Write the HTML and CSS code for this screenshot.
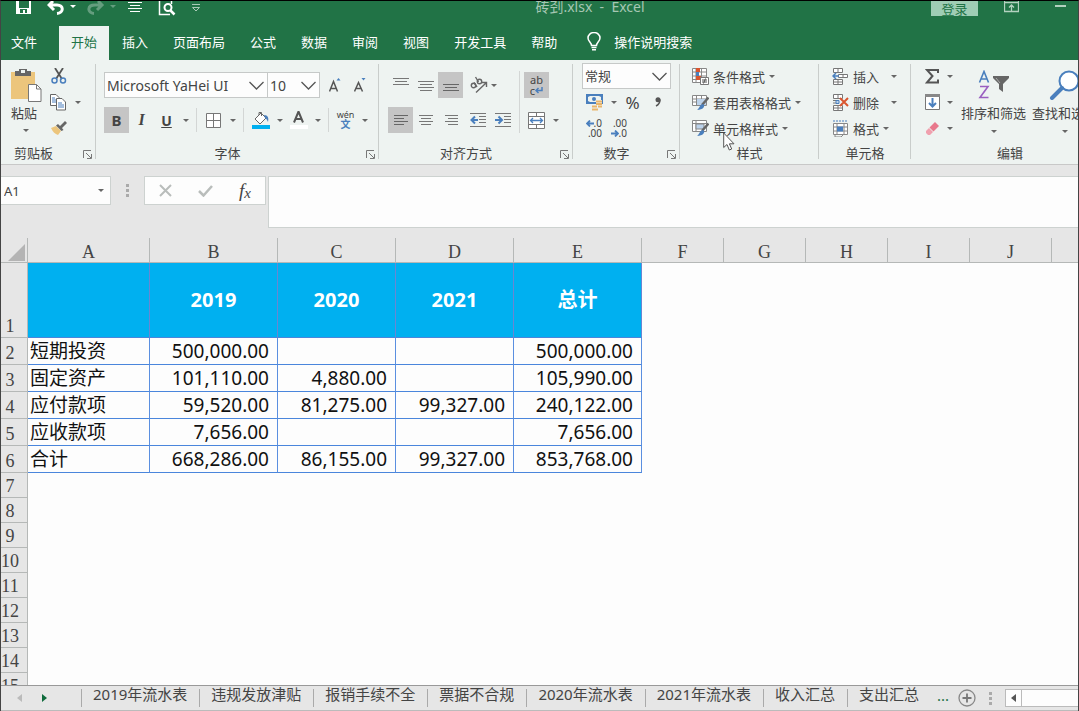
FILE: index.html
```html
<!DOCTYPE html>
<html lang="zh-CN">
<head>
  <meta charset="UTF-8" />
  <title>砖刭.xlsx - Excel</title>
  <link rel="stylesheet" href="styles.css">
</head>
<body>
  <header class="titlebar">
    <div class="quick">
      <button class="qbtn" aria-label="保存"><svg width="16" height="14" viewBox="0 0 16 14"><path d="M0 0h3v7h10V0h2v13H0z" fill="#fff"/><path d="M4 8h7v4H9V9H7v3H4z" fill="#217346"/></svg></button>
      <button class="qbtn undo" aria-label="撤消"><svg width="18" height="14" viewBox="0 0 18 14"><path d="M6 0L2 4l5 5M3 4h7c7 0 7 8 0 8.500" fill="none" stroke="#fff" stroke-width="3"/></svg><i class="caret"></i></button>
      <button class="qbtn redo" aria-label="恢复"><svg width="18" height="14" viewBox="0 0 18 14"><path d="M11 0l4 4-5 5M14 4H8C0 4 0 12 7 12.500" fill="none" stroke="#fff" stroke-width="3"/></svg><i class="caret"></i></button>
      <button class="qbtn" aria-label="居中"><svg width="16" height="12" viewBox="0 0 16 12"><path d="M1 1.500h14M3 4.500h10M1 7.500h14M3 10.500h10" stroke="#fff"/></svg></button>
      <button class="qbtn preview" aria-label="打印预览"><svg width="18" height="15" viewBox="0 0 18 15"><path d="M1.500 0v13.500H12M13.500 0v3" fill="none" stroke="#fff" stroke-width="1.500"/><circle cx="10" cy="6.500" r="3.500" fill="none" stroke="#fff" stroke-width="2"/><path d="M12.500 9.500l4 4" stroke="#fff" stroke-width="2.500"/></svg></button>
      <button class="qbtn" aria-label="自定义"><svg width="10" height="10" viewBox="0 0 10 10"><path d="M1 1.500h8M1.500 4.500h7L5 8z" fill="none" stroke="#a9cbb7"/></svg></button>
    </div>
    <h1 class="doc-title">砖刭.xlsx&nbsp; -&nbsp; Excel</h1>
    <button class="login">登录</button>
    <button class="winbtn" aria-label="功能区显示选项"><svg width="15" height="12" viewBox="0 0 15 12"><path d="M.5 0v10.500h14V0M1 1.500h13M7.500 10V4M5 6.500L7.500 4 10 6.500" fill="none" stroke="#b3d1bf" stroke-width="1.300"/></svg></button>
    <button class="winbtn min" aria-label="最小化"><svg width="11" height="12" viewBox="0 0 11 12"><path d="M0 5h11" stroke="#b3d1bf" stroke-width="2"/></svg></button>
  </header>

  <nav class="tabs">
    <button class="tab file">文件</button>
    <button class="tab active">开始</button>
    <button class="tab">插入</button>
    <button class="tab">页面布局</button>
    <button class="tab">公式</button>
    <button class="tab">数据</button>
    <button class="tab">审阅</button>
    <button class="tab">视图</button>
    <button class="tab">开发工具</button>
    <button class="tab">帮助</button>
    <button class="tab tell"><svg width="14" height="19" viewBox="0 0 14 19"><path d="M4.500 13.500c0-3-3.500-4-3.500-7.500a6 5.500 0 0 1 12 0c0 3.500-3.500 4.500-3.500 7.500z" fill="none" stroke="#fff" stroke-width="1.500"/><path d="M4.500 15.500h5M5 17.800h4" stroke="#fff" stroke-width="1.500"/></svg>操作说明搜索</button>
  </nav>

  <section class="ribbon">
    <div class="group clipboard">
      <div class="content">
        <button class="paste">
          <svg width="31" height="35" viewBox="0 0 31 35"><path d="M0 4h24v27H0z" fill="#ecc57c"/><path d="M4 3h4V1h8v2h4v5H4z" fill="#666"/><path d="M10 2h4v3h-4z" fill="#eef3f1"/><path d="M17.500 16.500h8l4.500 4.500v12.500H17.500z" fill="#fff" stroke="#777"/><path d="M25.500 16.500V21H30" fill="none" stroke="#777"/></svg>
          <span>粘贴</span>
          <i class="caret"></i>
        </button>
        <div class="stack">
          <button class="tool" aria-label="剪切"><svg width="16" height="16" viewBox="0 0 16 16"><path d="M4 0l7 11M12 0L5 11" stroke="#555" stroke-width="1.800"/><g fill="none" stroke="#4a7fbd" stroke-width="1.500"><circle cx="3.500" cy="12.500" r="2.500"/><circle cx="12" cy="12.500" r="2.500"/></g></svg></button>
          <button class="tool copy" aria-label="复制"><svg width="16" height="17" viewBox="0 0 16 17"><g fill="#fff" stroke="#666"><path d="M.5.5H6l3 3v8H.5z"/><path d="M6.500 4.500H12l3.500 3.500v8h-9z"/></g><path d="M2 4h3M2 6h4M2 8h4M8 9h4M8 11h6M8 13h6" stroke="#4a7fbd"/></svg><i class="caret"></i></button>
          <button class="tool" aria-label="格式刷"><svg width="16" height="14" viewBox="0 0 16 14"><path d="M0 7l5-2 5 5-3 4c-3-1-5-3-7-7z" fill="#ecc57c"/><path d="M5 4.500l2-1.500 2 2 5-5 2 2-5 5 1.500 2L10.500 10z" fill="#666"/></svg></button>
        </div>
      </div>
      <div class="label">剪贴板<svg class="launcher" width="9" height="9" viewBox="0 0 9 9"><path d="M.5 8V.5H8M3 3l5 5M8.500 4v4.500H4" fill="none" stroke="#777"/></svg></div>
    </div>

    <div class="group font">
      <div class="content rows">
        <div class="row">
          <label class="combo name"><select aria-label="字体"><option>Microsoft YaHei UI</option></select><svg width="15" height="9" viewBox="0 0 15 9"><path d="M.5 1l7 7 7-7" fill="none" stroke="#555" stroke-width="1.300"/></svg></label>
          <label class="combo size"><select aria-label="字号"><option>10</option></select><svg width="15" height="9" viewBox="0 0 15 9"><path d="M.5 1l7 7 7-7" fill="none" stroke="#555" stroke-width="1.300"/></svg></label>
          <button class="tool grow" aria-label="增大字号"><svg width="12" height="14" viewBox="0 0 12 14"><path d="M.5 13.500l4-10 4 10M2 10.500h5" fill="none" stroke="#555" stroke-width="1.500"/><path d="M7.500 2.500L9.500 0l2 2.500z" fill="#4a7fbd"/></svg></button>
          <button class="tool" aria-label="减小字号"><svg width="12" height="14" viewBox="0 0 12 14"><path d="M.5 13.500l4-9 4 9M2 10.500h5" fill="none" stroke="#555" stroke-width="1.500"/><path d="M7.500 0h4l-2 2.500z" fill="#4a7fbd"/></svg></button>
        </div>
        <div class="row">
          <button class="tool on bold">B</button>
          <button class="tool italic">I</button>
          <button class="tool underline">U</button><button class="drop" aria-label="下划线选项"><i class="caret"></i></button>
          <span class="sep"></span>
          <button class="tool" aria-label="边框"><svg width="15" height="15" viewBox="0 0 15 15"><path d="M.5.5h14v14H.5zM7.500 0v15M0 7.500h15" fill="#fff" stroke="#777"/></svg></button><button class="drop" aria-label="边框选项"><i class="caret"></i></button>
          <span class="sep"></span>
          <button class="tool" aria-label="填充颜色"><svg width="18" height="18" viewBox="0 0 18 18"><path d="M3 8l6-6 5 5-6 6z" fill="#fff" stroke="#666"/><path d="M7 4V1.500h2.500V5" fill="none" stroke="#666"/><path d="M12 4c4 0 5 3 4 7-1-2-1-3-3-4z" fill="#4a7fbd"/><path d="M0 14h18v4H0z" fill="#00b0f0"/></svg></button><button class="drop" aria-label="填充选项"><i class="caret"></i></button>
          <button class="tool" aria-label="字体颜色"><svg width="18" height="18" viewBox="0 0 18 18"><path d="M4 11.500l4.500-11 4.500 11M5.500 8h6" fill="none" stroke="#555" stroke-width="2"/><path d="M0 14h18v4H0z" fill="#fff"/></svg></button><button class="drop" aria-label="颜色选项"><i class="caret"></i></button>
          <span class="sep"></span>
          <button class="tool pinyin" aria-label="拼音"><span>wén</span><b>文</b></button><button class="drop" aria-label="拼音选项"><i class="caret"></i></button>
        </div>
      </div>
      <div class="label">字体<svg class="launcher" width="9" height="9" viewBox="0 0 9 9"><path d="M.5 8V.5H8M3 3l5 5M8.500 4v4.500H4" fill="none" stroke="#777"/></svg></div>
    </div>

    <div class="group align">
      <div class="content">
        <div class="rows">
          <div class="row">
            <button class="tool" aria-label="顶端对齐"><svg width="16" height="16" viewBox="0 0 16 16"><path d="M0 1.500h16M2 4.500h12M0 7.500h16" stroke="#777"/></svg></button>
            <button class="tool" aria-label="垂直居中"><svg width="16" height="16" viewBox="0 0 16 16"><path d="M0 4.500h16M2 7.500h12M0 10.500h16M2 13.500h12" stroke="#777"/></svg></button>
            <button class="tool on" aria-label="底端对齐"><svg width="16" height="16" viewBox="0 0 16 16"><path d="M0 7.500h16M2 10.500h12M0 13.500h16" stroke="#666"/></svg></button>
            <button class="tool orient" aria-label="方向"><svg width="18" height="18" viewBox="0 0 18 18"><g fill="none" stroke="#666" stroke-width="1.400"><circle cx="3.500" cy="9.500" r="2.200"/><path d="M4 6.500l3 4.500"/><circle cx="9.500" cy="5.500" r="2.200"/><path d="M5.500 1l3 5"/><path d="M6 16.500L16 7M12 6.500h4.500V11"/></g></svg><i class="caret"></i></button>
          </div>
          <div class="row">
            <button class="tool on" aria-label="左对齐"><svg width="14" height="12" viewBox="0 0 14 12"><path d="M0 1.500h14M0 4.500h10M0 7.500h14M0 10.500h10" stroke="#666"/></svg></button>
            <button class="tool" aria-label="居中"><svg width="14" height="12" viewBox="0 0 14 12"><path d="M0 1.500h14M2 4.500h10M0 7.500h14M2 10.500h10" stroke="#777"/></svg></button>
            <button class="tool" aria-label="右对齐"><svg width="14" height="12" viewBox="0 0 14 12"><path d="M1 1.500h13M4 4.500h10M1 7.500h13M4 10.500h10" stroke="#777"/></svg></button>
            <button class="tool outdent" aria-label="减少缩进量"><svg width="16" height="16" viewBox="0 0 16 16"><path d="M0 1.500h16M9 4.500h7M9 7.500h7M9 10.500h7M0 14.500h16" stroke="#777"/><path d="M8 8H2M5 4.500L1.500 8 5 11.500" fill="none" stroke="#4a7fbd" stroke-width="2"/></svg></button>
            <button class="tool" aria-label="增加缩进量"><svg width="16" height="16" viewBox="0 0 16 16"><path d="M0 1.500h16M9 4.500h7M9 7.500h7M9 10.500h7M0 14.500h16" stroke="#777"/><path d="M0 8h6M3.500 4.500L7 8l-3.500 3.500" fill="none" stroke="#4a7fbd" stroke-width="2"/></svg></button>
          </div>
        </div>
        <span class="sep tall"></span>
        <div class="rows">
          <div class="row">
            <button class="tool on wrap" aria-label="自动换行"><span>ab</span><span>c<svg width="8" height="7" viewBox="0 0 8 7"><path d="M7 0v3.500H1M3.500 1L1 3.500 3.500 6" fill="none" stroke="#4a7fbd" stroke-width="1.500"/></svg></span></button>
          </div>
          <div class="row">
            <button class="tool" aria-label="合并后居中"><svg width="17" height="17" viewBox="0 0 17 17"><path d="M.5.500h16v16H.5zM.5 4.500h16M.5 12.500h16M8.500 0v4M8.500 13v4" fill="#fff" stroke="#777"/><path d="M3 8.500h11M5 6L2.500 8.500 5 11M12 6l2.500 2.500L12 11" fill="none" stroke="#4a7fbd" stroke-width="1.300"/></svg></button><button class="drop" aria-label="合并选项"><i class="caret"></i></button>
          </div>
        </div>
      </div>
      <div class="label">对齐方式<svg class="launcher" width="9" height="9" viewBox="0 0 9 9"><path d="M.5 8V.5H8M3 3l5 5M8.500 4v4.500H4" fill="none" stroke="#777"/></svg></div>
    </div>

    <div class="group number">
      <div class="content stack">
        <label class="combo format"><select aria-label="数字格式"><option>常规</option></select><svg width="15" height="9" viewBox="0 0 15 9"><path d="M.5 1l7 7 7-7" fill="none" stroke="#555" stroke-width="1.300"/></svg></label>
        <div class="row">
          <button class="tool" aria-label="会计数字格式"><svg width="17" height="17" viewBox="0 0 17 17"><path d="M0 0h17v10H0z" fill="#4a7fbd"/><path d="M2 3l2-1h9l2 1v4l-2 1H4L2 7z" fill="#eef3f1"/><circle cx="8" cy="5" r="2" fill="#4a7fbd"/><path d="M10 6h6v10H6v-5h4z" fill="#eef3f1"/><path d="M10 7.500h6M10 10h6M6 12.500h5M12 12.500h4M6 15.500h6" stroke="#e9b56b" stroke-width="2"/></svg></button><button class="drop" aria-label="货币选项"><i class="caret"></i></button>
          <button class="tool percent">%</button>
          <button class="tool" aria-label="千位分隔样式"><svg width="6" height="10" viewBox="0 0 6 10"><circle cx="3" cy="2.800" r="2.500" fill="#555"/><path d="M5 2.500c0 3-1 5-4 6.500" fill="none" stroke="#555" stroke-width="1.500"/></svg></button>
        </div>
        <div class="row">
          <button class="tool decimal" aria-label="增加小数位数"><span><svg width="8" height="7" viewBox="0 0 8 7"><path d="M8 3.500H2M4 .500L1 3.500l3 3" fill="none" stroke="#4a7fbd" stroke-width="1.800"/></svg>.0</span><span>.00</span></button>
          <button class="tool decimal" aria-label="减少小数位数"><span>.00</span><span><svg width="8" height="7" viewBox="0 0 8 7"><path d="M0 3.500h6M4 .500l3 3-3 3" fill="none" stroke="#4a7fbd" stroke-width="1.800"/></svg>.0</span></button>
        </div>
      </div>
      <div class="label">数字<svg class="launcher" width="9" height="9" viewBox="0 0 9 9"><path d="M.5 8V.5H8M3 3l5 5M8.500 4v4.500H4" fill="none" stroke="#777"/></svg></div>
    </div>

    <div class="group styles">
      <div class="content stack">
        <button class="cmd"><svg width="17" height="17" viewBox="0 0 17 17"><path d="M.5.500h14v14H.5zM.5 4h14M.5 8h14M.5 11.500h14M4 .500v14M9.500.500v14" fill="#fff" stroke="#888"/><path d="M4 0h4v4H4zM4 8h5v4H4z" fill="#d9552f"/><path d="M4 4h3v4H4z" fill="#4a7fbd"/><path d="M8.500 9.500h8v7h-8z" fill="#fff" stroke="#777"/><path d="M10 12h5M10 14h5M13.500 10.500l-2 5" stroke="#555"/></svg>条件格式<i class="caret"></i></button>
        <button class="cmd"><svg width="17" height="17" viewBox="0 0 17 17"><path d="M.5 1.500h14v10H.5zM.5 5h14M.5 8h14M4.500 1.500v10M9.500 1.500v10" fill="#fff" stroke="#888"/><path d="M5 5h9v6H5z" fill="#bcd2ea"/><path d="M16.500 3.500L10 11" stroke="#666" stroke-width="2.500"/><path d="M11 10c3 2 0 6-6 6 3-2 2-5 6-6z" fill="#4a7fbd"/></svg>套用表格格式<i class="caret"></i></button>
        <button class="cmd"><svg width="17" height="17" viewBox="0 0 17 17"><path d="M.5.500h14v11H.5zM.5 3.500h14M4 .500v11" fill="#fff" stroke="#888"/><path d="M4 4h8v5H4z" fill="#bcd2ea" stroke="#888"/><path d="M16.500 3.500L10 11" stroke="#666" stroke-width="2.500"/><path d="M11 10c3 2 0 6-6 6 3-2 2-5 6-6z" fill="#4a7fbd"/></svg>单元格样式<i class="caret"></i></button>
        <svg class="pointer" width="12" height="19" viewBox="0 0 12 19"><path d="M.7 1v14.500l3.300-3 2.300 5.500 2.400-1-2.300-5.200H11z" fill="#fff" stroke="#555"/></svg>
      </div>
      <div class="label">样式</div>
    </div>

    <div class="group cells">
      <div class="content stack">
        <button class="cmd wide"><svg width="17" height="17" viewBox="0 0 17 17"><path d="M1.500.500h9v4h-9zM6 .500v4M1.500 11.500h9v5h-9zM1.500 14h9M6 11.500v5M6.500 6.500h9v3h-9zM11 6.500v3" fill="#fff" stroke="#777"/><path d="M7 8H1M4 5L1 8l3 3" fill="none" stroke="#4a7fbd" stroke-width="1.500"/></svg><span>插入</span><i class="caret"></i></button>
        <button class="cmd wide"><svg width="17" height="17" viewBox="0 0 17 17"><path d="M1.500.500h9v4h-9zM6 .500v4M1.500 11.500h9v5h-9zM1.500 14h9M6 11.500v5M1 6.500h6M1 9h6" fill="#fff" stroke="#777"/><path d="M4 6.500h3v3H4z" fill="#bcd2ea" stroke="#4a7fbd"/><path d="M8 4l8 8M16 4l-8 8" stroke="#d9552f" stroke-width="2"/></svg><span>删除</span><i class="caret"></i></button>
        <button class="cmd"><svg width="17" height="17" viewBox="0 0 17 17"><path d="M1.500 3.500h14v11h-14zM1.500 7h14M1.500 11h14M5 3.500v11M12 3.500v11" fill="#fff" stroke="#888"/><path d="M5 6.500h6v5H5z" fill="#4a7fbd"/><path d="M1 1h15" stroke="#4a7fbd" stroke-dasharray="2 1"/><path d="M3 15v2h6l2-2" fill="none" stroke="#888"/></svg>格式<i class="caret"></i></button>
      </div>
      <div class="label">单元格</div>
    </div>

    <div class="group editing">
      <div class="content">
        <div class="stack">
          <button class="cmd" aria-label="自动求和"><svg width="15" height="15" viewBox="0 0 15 15"><path d="M13 4V1H2l5.500 6L2 13.500h11v-3" fill="none" stroke="#555" stroke-width="2"/></svg><i class="caret"></i></button>
          <button class="cmd" aria-label="填充"><svg width="15" height="16" viewBox="0 0 15 16"><path d="M.5.500h14v15H.5z" fill="#fff" stroke="#777"/><path d="M0 0h15v3H0z" fill="#888"/><path d="M7.500 4v8M4 9l3.500 3.500L11 9" fill="none" stroke="#4a7fbd" stroke-width="2"/></svg><i class="caret"></i></button>
          <button class="cmd" aria-label="清除"><svg width="15" height="15" viewBox="0 0 15 15"><path d="M4.500 6.500L10 1l4 4-5.500 5.500z" fill="#e8788c"/><path d="M4 7l4 4-3 3H3l-2-2v-2z" fill="#f0a0ae"/></svg><i class="caret"></i></button>
        </div>
        <button class="big"><svg width="32" height="30" viewBox="0 0 32 30"><path d="M1.500 12.500L6 1.500l4.500 11M3 9h6" fill="none" stroke="#4a7fbd" stroke-width="1.600"/><path d="M2 16.500h8L2 27.500h8.500" fill="none" stroke="#9a5fc0" stroke-width="1.600"/><path d="M15 6h16v2l-6 6v8l-4-3v-5l-6-6z" fill="#666"/><path d="M18 8l4 5" stroke="#aaa"/></svg><span>排序和筛选</span><i class="caret"></i></button>
        <button class="big"><svg width="32" height="30" viewBox="0 0 32 30"><circle cx="20" cy="11" r="9.500" fill="#fff" stroke="#4a7fbd" stroke-width="2"/><path d="M13 18L3 28" stroke="#4a7fbd" stroke-width="4" stroke-linecap="round"/></svg><span>查找和选择</span><i class="caret"></i></button>
      </div>
      <div class="label">编辑</div>
    </div>
  </section>

  <section class="formula-bar">
    <label class="name-box"><input value="A1" aria-label="名称框"><i class="caret"></i></label>
    <span class="dots"></span>
    <div class="fx-box">
      <button aria-label="取消"><svg width="13" height="13" viewBox="0 0 13 13"><path d="M1 1l11 11M12 1L1 12" stroke="#b9bdbb" stroke-width="2"/></svg></button>
      <button aria-label="输入"><svg width="15" height="12" viewBox="0 0 15 12"><path d="M1 6l4.500 4.500L14 1" fill="none" stroke="#b9bdbb" stroke-width="2.500"/></svg></button>
      <button class="fx"><i>f</i><small>x</small></button>
    </div>
    <textarea class="formula" aria-label="编辑栏"></textarea>
  </section>

  <main class="sheet">
    <table>
      <colgroup>
        <col class="c-head"><col class="c-a"><col class="c-b"><col class="c-c"><col class="c-c"><col class="c-b">
        <col class="c-std"><col class="c-std"><col class="c-std"><col class="c-std"><col class="c-std"><col>
      </colgroup>
      <thead>
        <tr>
          <th class="corner"><svg width="17" height="17" viewBox="0 0 17 17"><path d="M17 0v17H0z" fill="#b4b4b4"/></svg></th>
          <th>A</th><th>B</th><th>C</th><th>D</th><th>E</th><th>F</th><th>G</th><th>H</th><th>I</th><th>J</th><th></th>
        </tr>
      </thead>
      <tbody>
        <tr class="years"><th>1</th><td></td><td>2019</td><td>2020</td><td>2021</td><td>总计</td></tr>
        <tr class="data"><th>2</th><td>短期投资</td><td>500,000.00</td><td></td><td></td><td>500,000.00</td></tr>
        <tr class="data"><th>3</th><td>固定资产</td><td>101,110.00</td><td>4,880.00</td><td></td><td>105,990.00</td></tr>
        <tr class="data"><th>4</th><td>应付款项</td><td>59,520.00</td><td>81,275.00</td><td>99,327.00</td><td>240,122.00</td></tr>
        <tr class="data"><th>5</th><td>应收款项</td><td>7,656.00</td><td></td><td></td><td>7,656.00</td></tr>
        <tr class="data"><th>6</th><td>合计</td><td>668,286.00</td><td>86,155.00</td><td>99,327.00</td><td>853,768.00</td></tr>
        <tr><th>7</th></tr>
        <tr><th>8</th></tr>
        <tr><th>9</th></tr>
        <tr><th>10</th></tr>
        <tr><th>11</th></tr>
        <tr><th>12</th></tr>
        <tr><th>13</th></tr>
        <tr><th>14</th></tr>
        <tr><th>15</th></tr>
      </tbody>
    </table>
  </main>

  <footer class="sheet-bar">
    <div class="arrows">
      <button aria-label="上一个"><svg width="5" height="8" viewBox="0 0 5 8"><path d="M5 0v8L0 4z" fill="#bbb"/></svg></button>
      <button aria-label="下一个"><svg width="5" height="8" viewBox="0 0 5 8"><path d="M0 0v8l5-4z" fill="#0f6b3c"/></svg></button>
    </div>
    <button class="sheet-tab">2019年流水表</button>
    <button class="sheet-tab">违规发放津贴</button>
    <button class="sheet-tab">报销手续不全</button>
    <button class="sheet-tab">票据不合规</button>
    <button class="sheet-tab">2020年流水表</button>
    <button class="sheet-tab">2021年流水表</button>
    <button class="sheet-tab">收入汇总</button>
    <button class="sheet-tab">支出汇总</button>
    <button class="more">...</button>
    <button class="add" aria-label="新工作表"><svg width="18" height="18" viewBox="0 0 18 18"><circle cx="9" cy="9" r="8" fill="none" stroke="#888" stroke-width="1.300"/><path d="M9 4.500v9M4.500 9h9" stroke="#777" stroke-width="1.800"/></svg></button>
    <span class="dots"></span>
    <div class="scroll"><button aria-label="向左滚动"><svg width="5" height="8" viewBox="0 0 5 8"><path d="M5 0v8L0 4z" fill="#555"/></svg></button></div>
  </footer>
</body>
</html>
```
FILE: styles.css
```css
* {
  box-sizing: border-box;
}
body {
  margin: 0;
  height: 100vh;
  display: flex;
  flex-direction: column;
  overflow: hidden;
  border: 1px solid #444;
  border-top-color: #000;
  border-bottom: 0;
  background: #e6e6e6;
  color: #444;
  font-family: "Noto Sans", "Noto Sans CJK SC", sans-serif;
  font-size: 13px;
}
button {
  display: flex;
  align-items: center;
  justify-content: center;
  flex: none;
  padding: 0;
  border: 0;
  background: none;
  color: inherit;
  font: inherit;
  white-space: nowrap;
}
svg {
  display: block;
  flex: none;
}
.caret {
  flex: none;
  border: 3px solid transparent;
  border-top-color: #666;
  border-bottom: 0;
}

/* title bar */
.titlebar {
  display: flex;
  align-items: flex-start;
  flex: none;
  height: 25px;
  overflow: hidden;
  background: #217346;
}
.quick {
  display: flex;
  width: 248px;
  padding-left: 15px;
  gap: 15px;
}
.qbtn {
  align-items: flex-start;
  gap: 5px;
}
.qbtn .caret {
  margin-top: 4px;
  border-top-color: #fff;
}
.qbtn:last-child {
  margin-top: 2px;
}
.redo {
  opacity: 0.3;
}
.redo,
.undo {
  margin-right: -4px;
}
.doc-title {
  flex: 1;
  margin: 0;
  font-size: 14px;
  font-weight: normal;
  line-height: 12px;
  text-align: center;
  color: #a6c7b3;
}
.login {
  width: 47px;
  height: 15px;
  margin-right: 26px;
  line-height: 12px;
  background: #9fcdb5;
  color: #217346;
}
.winbtn {
  margin-right: 36px;
}
.winbtn.min {
  margin-right: 12px;
}

/* ribbon tabs */
.tabs {
  display: flex;
  flex: none;
  height: 34px;
  gap: 1px;
  background: #217346;
  color: #fff;
}
.tab {
  height: 34px;
  padding: 0 12px 3px;
}
.tab.file {
  padding: 0 23px 3px 10px;
  margin-right: -2px;
}
.tab.active {
  background: #eef3f1;
  color: #217346;
}
.tab.tell {
  gap: 13px;
  padding-left: 17px;
}

/* ribbon */
.ribbon {
  display: flex;
  flex: none;
  overflow: hidden;
  background: #eef3f1;
  border-bottom: 1px solid #c8c8c8;
}
.group {
  position: relative;
  flex: none;
  padding-top: 3px;
}
.group::after {
  content: "";
  position: absolute;
  top: 4px;
  right: 0;
  bottom: 5px;
  width: 1px;
  background: #c9cdcb;
}
.content {
  position: relative;
  display: flex;
  height: 79px;
}
.label {
  line-height: 22px;
  text-align: center;
}
.launcher {
  position: absolute;
  right: 4px;
  bottom: 5px;
}
.group:has(.launcher) .label {
  padding-right: 20px;
}
.group.clipboard .label {
  padding-right: 30px;
}
.stack {
  display: flex;
  flex-direction: column;
}
.stack > * {
  height: 26px;
}
.rows {
  display: flex;
  flex-direction: column;
  gap: 9px;
  padding-top: 9px;
}
.row {
  display: flex;
  align-items: center;
}
.tool {
  width: 25px;
  height: 26px;
}
.tool.on {
  background: #c5c5c5;
}
.drop {
  width: 13px;
  height: 26px;
}
.sep {
  width: 1px;
  height: 24px;
  margin: 0 4px;
  background: #d3d6d5;
}
.sep.tall {
  height: 62px;
  margin-top: 8px;
}
.combo {
  position: relative;
  display: block;
  height: 26px;
}
.combo select {
  appearance: none;
  width: 100%;
  height: 100%;
  padding: 0 2px;
  border: 1px solid #c6c9c8;
  border-radius: 0;
  background: #fdfdfd;
  color: #444;
  font: inherit;
}
.combo svg {
  position: absolute;
  top: 9px;
  right: 4px;
}

.clipboard {
  width: 95px;
}
.clipboard .content {
  padding-left: 10px;
}
.paste {
  flex-direction: column;
  justify-content: flex-start;
  align-items: flex-start;
  padding-top: 5px;
  margin-right: 4px;
}
.paste span {
  line-height: 20px;
}
.paste .caret {
  margin: 6px 0 0 12px;
}
.clipboard .stack {
  align-items: flex-start;
}
.clipboard .copy {
  width: 38px;
  gap: 9px;
  padding-left: 4px;
  justify-content: flex-start;
}
.font {
  width: 283px;
}
.font .rows {
  padding-left: 8px;
}
.name {
  width: 164px;
  font-size: 14px;
}
.size {
  width: 53px;
  margin-left: -1px;
  font-size: 14px;
}
.grow {
  margin-left: 2px;
}
.bold {
  font-size: 15px;
  font-weight: bold;
}
.italic {
  font: italic bold 16px "Liberation Serif", serif;
}
.underline {
  font-size: 14px;
  font-weight: bold;
  text-decoration: underline;
}
.pinyin {
  flex-direction: column;
  font-size: 9px;
  line-height: 9px;
}
.pinyin b {
  font-size: 10px;
  line-height: 11px;
  color: #4a7fbd;
}
.align {
  width: 194px;
}
.align .content {
  padding-left: 9px;
}
.orient {
  width: 32px;
  margin-left: 4px;
  gap: 3px;
}
.outdent {
  margin-left: 2px;
}
.wrap {
  flex-direction: column;
  font-size: 11px;
  line-height: 11px;
}
.wrap span,
.decimal span {
  display: flex;
  align-items: center;
}
.number {
  width: 107px;
}
.number .content {
  padding-left: 9px;
}
.format {
  width: 89px;
}
.percent {
  font-size: 17px;
}
.decimal {
  flex-direction: column;
  align-items: flex-end;
  padding-right: 5px;
  font-size: 10px;
  line-height: 10px;
}
.cmd {
  justify-content: flex-start;
  gap: 4px;
}
.wide span {
  margin-right: 8px;
}
.styles {
  width: 139px;
}
.styles .content {
  padding-left: 12px;
}
.pointer {
  position: absolute;
  top: 69px;
  left: 43px;
}
.stack > .pointer {
  height: 19px;
}
.cells {
  width: 92px;
}
.cells .content {
  padding-left: 13px;
}
.editing {
  width: 198px;
}
.editing .content {
  padding-left: 14px;
  gap: 6px;
}
.editing .cmd {
  gap: 7px;
  margin-right: 2px;
}
.big {
  flex-direction: column;
  justify-content: flex-start;
  padding-top: 7px;
}
.big span {
  margin-top: 3px;
  line-height: 20px;
}
.big .caret {
  margin-top: 7px;
}

/* formula bar */
.formula-bar {
  display: flex;
  align-items: flex-start;
  flex: none;
  padding: 11px 0 10px;
}
.name-box {
  position: relative;
  width: 110px;
  height: 29px;
}
.name-box input {
  width: 100%;
  height: 100%;
  padding: 0 3px;
  border: 1px solid #cdd2d0;
  border-left: 0;
  background: #fdfdfd;
  color: #444;
  font: inherit;
}
.name-box .caret {
  position: absolute;
  top: 13px;
  right: 7px;
}
.dots {
  width: 3px;
  height: 13px;
  background: repeating-linear-gradient(#aaa 0 3px, transparent 3px 5px);
}
.formula-bar .dots {
  margin: 8px 15px 0 15px;
}
.fx-box {
  display: flex;
  align-items: center;
  width: 122px;
  height: 29px;
  border: 1px solid #cdd2d0;
  background: #fdfdfd;
}
.fx-box button {
  width: 40px;
}
.fx-box .fx {
  font: italic 19px/24px "Liberation Serif", serif;
}
.fx small {
  margin-top: 4px;
  font-size: 15px;
}
.formula {
  flex: 1;
  height: 52px;
  margin-left: 2px;
  border: 1px solid #cdd2d0;
  border-right: 0;
  background: #fdfdfd;
  resize: none;
}

/* sheet */
.sheet {
  flex: 1;
  min-height: 0;
  overflow: hidden;
  background: #fdfdfd;
}
table {
  width: 100%;
  table-layout: fixed;
  border-collapse: separate;
  border-spacing: 0;
}
.c-head { width: 27px; }
.c-a { width: 122px; }
.c-b { width: 128px; }
.c-c { width: 118px; }
.c-std { width: 82px; }
th {
  height: 25px;
  padding: 0;
  border-right: 1px solid #b5b8b7;
  border-bottom: 1px solid #b5b8b7;
  background: #e6e6e6;
  font: 18px/20px "Liberation Serif", serif;
}
thead th {
  padding-top: 4px;
}
thead th:last-child {
  border-right: 0;
}
tbody th {
  padding: 0 8px 1px 0;
  vertical-align: bottom;
}
.corner svg {
  margin-left: 7px;
}
td {
  padding: 0 8px 0 0;
  border-right: 1px solid #5b8fe0;
  border-bottom: 1px solid #4a86dc;
  color: #111;
  font-size: 19px;
  line-height: 24px;
  text-align: right;
}
.data th,
.data td {
  height: 27px;
}
.data td:nth-child(2) {
  padding-left: 2px;
  text-align: left;
}
.years td {
  height: 75px;
  padding: 0;
  border-right-color: #6a86d2;
  background: #00b0f0;
  color: #fff;
  font-size: 20px;
  font-weight: bold;
  text-align: center;
}

/* sheet tabs */
.sheet-bar {
  display: flex;
  flex: none;
  height: 26px;
  border-top: 1px solid #999;
  border-bottom: 1px solid #bbb;
}
.arrows {
  display: flex;
  width: 80px;
  padding-left: 16px;
  gap: 20px;
}
.sheet-tab {
  position: relative;
  height: 16px;
  padding: 0 12px;
  font-size: 15px;
  line-height: 16px;
}
.sheet-tab::before {
  content: "";
  position: absolute;
  top: 3px;
  left: 0;
  width: 1px;
  height: 18px;
  background: #aaa;
}
.more {
  width: 24px;
  height: 18px;
  margin-right: 3px;
  font-size: 15px;
  line-height: 18px;
  color: #217346;
}
.sheet-bar .dots {
  margin: 6px 13px 0 13px;
}
.scroll {
  flex: 1;
  height: 18px;
  margin-top: 3px;
  border: 1px solid #bbb;
  border-right: 0;
  background: #fdfdfd;
}
.scroll button {
  width: 16px;
  height: 16px;
  border-right: 1px solid #bbb;
}
```
